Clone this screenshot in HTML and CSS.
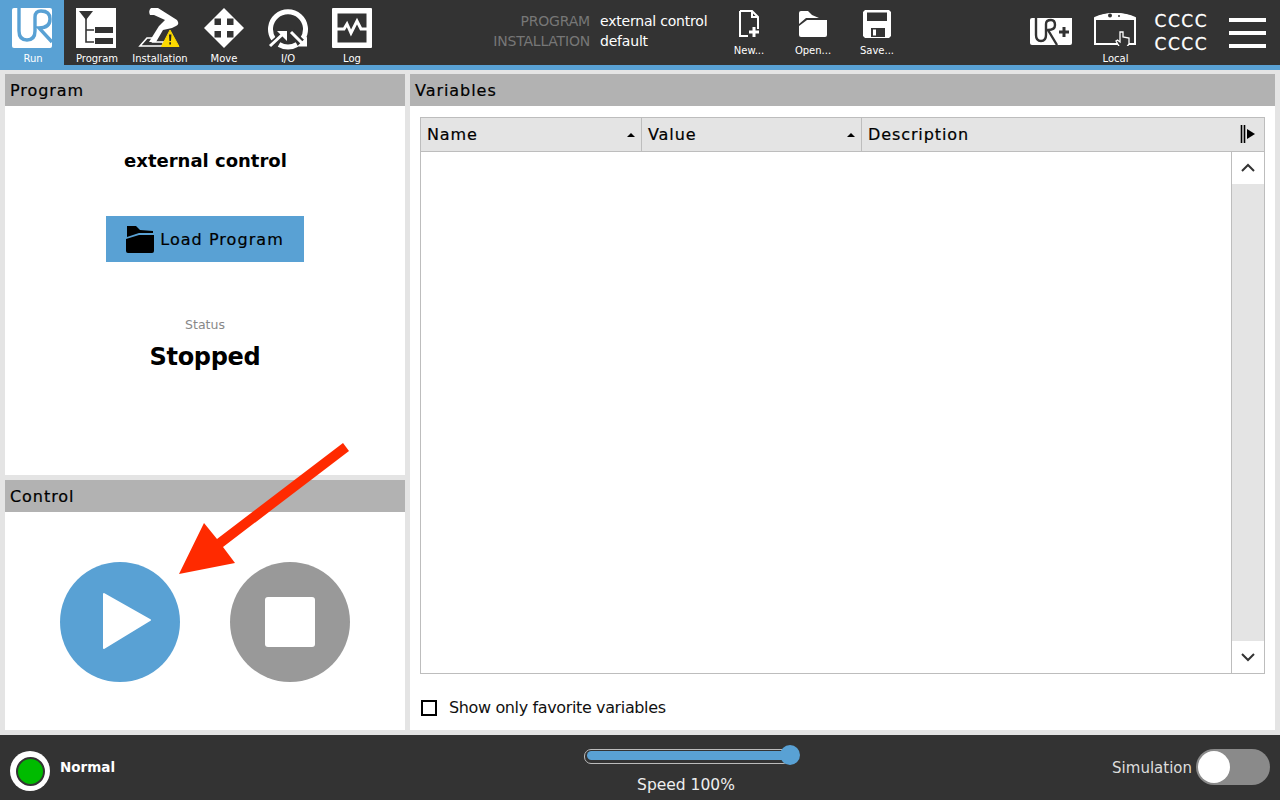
FILE: index.html
```html
<!DOCTYPE html>
<html lang="en">
<head>
  <meta charset="UTF-8">
  <title>PolyScope – Run</title>
  <link rel="stylesheet" href="styles.css">
</head>
<body>
  <header class="topbar">
    <nav class="nav">
      <a class="nav-item active">
        <svg class="nav-icon" viewBox="9 6 48 44"><rect x="12" y="8" width="40" height="40" rx="2" fill="#fff"/><path d="M19 8V31Q19 40 27 40Q35 40 35 31V17Q35 11 41 11Q50 11 50 19Q50 28 39 28L52 42" fill="none" stroke="#59a1d4" stroke-width="3.4"/></svg>
        <span>Run</span>
      </a>
      <a class="nav-item shifted">
        <svg class="nav-icon" viewBox="73 6 48 44"><rect x="76" y="8" width="40" height="40" fill="#fff"/><path d="M79 11H93L86 20Z" fill="#333"/><path d="M86 18V42H94M86 30H94" fill="none" stroke="#333" stroke-width="1.6"/><rect x="95" y="27" width="18" height="6" fill="#333"/><rect x="95" y="38" width="18" height="6" fill="#333"/></svg>
        <span>Program</span>
      </a>
      <a class="nav-item">
        <svg class="nav-icon" viewBox="136 6 48 44"><path d="M151 8H158L177 20Q180 24 176 26L172 28L163 30L156 42H149L159 26L165 20L154 15H150Q148 11 151 8Z" fill="#fff"/><path d="M147 38H156L153 42H164L162 46H140Z" fill="none" stroke="#fff" stroke-width="1.6"/><path d="M170 30L179 46.500H161.500Z" fill="#fbd800" stroke="#fbd800" stroke-linejoin="round"/><path d="M169 34.500H171.400L171 41H169.400ZM169.300 42.300H171V44.500H169.300Z" fill="#222"/></svg>
        <span>Installation</span>
      </a>
      <a class="nav-item">
        <svg class="nav-icon" viewBox="200 6 48 44"><path fill-rule="evenodd" d="M224 8L244 28L224 48L204 28ZM214.500 18.500V25H221V18.500ZM227 18.500V25H233.500V18.500ZM214.500 31V37.500H221V31ZM227 31V37.500H233.500V31Z" fill="#fff"/></svg>
        <span>Move</span>
      </a>
      <a class="nav-item">
        <svg class="nav-icon" viewBox="264 6 48 44"><path d="M273.500 39A17.500 17.500 0 1 1 302.500 39M279 44.500A18 18 0 0 0 297 44.500" fill="none" stroke="#fff" stroke-width="5"/><path d="M269 47L284 33M291 31L304 44" fill="none" stroke="#333" stroke-width="6"/><path d="M270 46L284 33M291 32L303 44" fill="none" stroke="#fff" stroke-width="3"/><path d="M277 31H287V41ZM297 46.500H307V36.500Z" fill="#fff"/></svg>
        <span>I/O</span>
      </a>
      <a class="nav-item">
        <svg class="nav-icon" viewBox="328 6 48 44"><rect x="332" y="8" width="40" height="40" rx="1" fill="#fff"/><rect x="337.500" y="13.500" width="29" height="29" fill="#333"/><path d="M337 29H344L347 24L351 33L357 21L361 29H367" fill="none" stroke="#fff" stroke-width="3"/></svg>
        <span>Log</span>
      </a>
    </nav>

    <div class="info">
      <span class="info-label">PROGRAM</span><span class="info-value">external control</span>
      <span class="info-label">INSTALLATION</span><span class="info-value">default</span>
    </div>

    <div class="files">
      <a class="file-item">
        <svg class="file-icon" viewBox="735 8 28 32"><path d="M740 11H752L758 17V29M748 36H740V11M752 11V17H758" fill="none" stroke="#fff" stroke-width="2"/><path d="M754 27V37M749 32H759" stroke="#fff" stroke-width="3"/></svg>
        <span>New...</span>
      </a>
      <a class="file-item">
        <svg class="file-icon" viewBox="799 8 28 32"><path d="M799 13Q799 11 801 11H808L812 15L819 18H806L799 24ZM799 26L807 20H827V35Q827 37 825 37H801Q799 37 799 35Z" fill="#fff"/></svg>
        <span>Open...</span>
      </a>
      <a class="file-item">
        <svg class="file-icon" viewBox="863 8 28 32"><path d="M865 10H889L891 12V36L889 38H865L863 36V12Z" fill="#fff"/><rect x="867" y="12.500" width="20" height="8.500" fill="#333"/><rect x="871" y="28" width="14" height="9" fill="#333"/><rect x="873" y="29.500" width="3" height="6" fill="#fff"/></svg>
        <span>Save...</span>
      </a>
    </div>

    <div class="tools">
      <svg class="urplus" viewBox="1030 17 42 29"><path d="M1032 18H1072V43Q1072 45 1070 45H1032Q1030 45 1030 43V20Q1030 18 1032 18Z" fill="#fff"/><path d="M1036 18V35Q1036 41 1041 41Q1046 41 1046 35V24Q1046 20 1051 20Q1055 20 1055 25Q1055 30 1048 30L1057 45" fill="none" stroke="#333" stroke-width="2.400"/><path d="M1064 27V37M1059 32H1069" stroke="#333" stroke-width="3"/></svg>
      <a class="local">
        <svg class="local-icon" viewBox="1092 10 48 36"><path d="M1095 44V18Q1103 14 1115 14Q1127 14 1135 18V44Z" fill="none" stroke="#fff" stroke-width="2"/><path d="M1095 18Q1103 13 1115 13Q1127 13 1135 18V20H1095Z" fill="#fff"/><circle cx="1110" cy="15.500" r="2" fill="#333"/><circle cx="1119" cy="16" r="1" fill="#333"/><path d="M1120 32H1123V37L1129 38V44L1126 48H1120L1116 41L1117.500 40L1120 42Z" fill="#333" stroke="#fff" stroke-width="1.300"/></svg>
        <span>Local</span>
      </a>
      <div class="ccc"><span>CCCC</span><span>CCCC</span></div>
      <div class="burger"><i></i><i></i><i></i></div>
    </div>
  </header>
  <div class="accent"></div>

  <main class="content">
    <div class="left">
      <section class="panel program-panel">
        <h2 class="panel-title">Program</h2>
        <div class="program-body">
          <div class="program-name">external control</div>
          <button class="load-btn">
            <svg viewBox="127 225 29 27"><path d="M128 225H137L141 229L154 230V232H140L128 236ZM127 238L140 234H155V250Q155 252 153 252H129Q127 252 127 250Z" fill="#000"/></svg>
            Load Program
          </button>
          <div class="status-label">Status</div>
          <div class="status-value">Stopped</div>
        </div>
      </section>
      <section class="panel control-panel">
        <h2 class="panel-title">Control</h2>
        <div class="control-body">
          <button class="round play"><svg viewBox="0 0 120 120"><path d="M44 32L90 58L44 86Z" fill="#fff" stroke="#fff" stroke-width="2" stroke-linejoin="round"/></svg></button>
          <button class="round stop"><span class="stop-square"></span></button>
        </div>
      </section>
    </div>

    <section class="panel vars">
      <h2 class="panel-title">Variables</h2>
      <div class="vars-body">
        <div class="table">
          <div class="thead">
            <div class="th name">Name<i class="sort"></i></div>
            <div class="th value">Value<i class="sort"></i></div>
            <div class="th desc">Description
              <svg class="col-toggle" viewBox="0 0 16 18"><path d="M1.500 0V18M4.500 0V18" stroke="#000" stroke-width="1.600"/><path d="M7 4L15 9L7 14Z" fill="#000"/></svg>
            </div>
          </div>
          <div class="tbody">
            <div class="rows"></div>
            <div class="scroll">
              <div class="scroll-btn"><svg viewBox="0 0 16 10"><path d="M2 8L8 2L14 8" fill="none" stroke="#333" stroke-width="2"/></svg></div>
              <div class="scroll-track"></div>
              <div class="scroll-btn"><svg viewBox="0 0 16 10"><path d="M2 2L8 8L14 2" fill="none" stroke="#333" stroke-width="2"/></svg></div>
            </div>
          </div>
        </div>
        <label class="fav"><i class="check"></i>Show only favorite variables</label>
      </div>
    </section>
  </main>

  <footer class="bottombar">
    <div class="robot-state">
      <div class="led"><i></i></div>
      <span>Normal</span>
    </div>
    <div class="speed">
      <div class="slider"><div class="fill"></div><div class="thumb"></div></div>
      <div class="speed-label">Speed 100%</div>
    </div>
    <div class="sim">
      <span>Simulation</span>
      <div class="toggle"><i></i></div>
    </div>
  </footer>

  <svg class="arrow" viewBox="0 0 1280 800"><path d="M343 443L349 451L223 547L235 563L179 574L204 523L217 539Z" fill="#ff2a00"/></svg>
</body>
</html>
```

FILE: styles.css
```css
:root{
  --dark:#333;
  --blue:#59a1d4;
  --bg:#e4e4e4;
  --head:#b2b2b2;
  --border:#bdbdbd;
}
*{box-sizing:border-box;margin:0}
html,body{height:100%}
body{
  font-family:"DejaVu Sans",sans-serif;
  background:var(--bg);color:#000;
  width:1280px;height:800px;overflow:hidden;
  display:flex;flex-direction:column;
}
.topbar{height:65px;background:var(--dark);display:flex;color:#fff;flex:none}
.accent{height:5px;background:var(--blue);flex:none}
.nav{display:flex;width:384px;flex:none}
.nav-item{width:64px;height:65px;display:flex;flex-direction:column;align-items:center;padding-top:6px;font-size:10px}
.nav-item.active{background:var(--blue);padding-left:2px}
.nav-item.shifted{padding-left:2px}
.nav-icon{width:48px;height:44px;display:block}
.nav-item span{line-height:12px;margin-top:3px}
.info{width:333px;flex:none;display:grid;grid-template-columns:206px auto;column-gap:10px;align-content:start;padding-top:11px;font-size:14px;line-height:20px;letter-spacing:-.2px}
.info-label{color:#777;text-align:right}
.files{display:flex;flex:none;width:192px}
.file-item{width:64px;display:flex;flex-direction:column;align-items:center;padding-top:8px;font-size:10px}
.file-icon{width:28px;height:32px;display:block}
.file-item span{margin-top:5px;line-height:12px}
.tools{margin-left:auto;display:flex;align-items:flex-start;padding-right:14px}
.urplus{width:42px;height:29px;margin-top:17px}
.local{width:48px;margin-left:20px;display:flex;flex-direction:column;align-items:center;padding-top:10px;font-size:10px}
.local-icon{width:48px;height:36px;display:block}
.local span{line-height:12px;margin-top:7px}
.ccc{display:flex;flex-direction:column;margin-left:15px;font-size:17px;line-height:23px;letter-spacing:1.500px;padding-top:10px;-webkit-text-stroke:.3px #fff}
.burger{display:flex;flex-direction:column;gap:9px;margin-left:21px;padding-top:18px}
.burger i{display:block;width:37px;height:4px;background:#fff}

.content{flex:1;display:flex;gap:5px;padding:4px 5px 5px;min-height:0}
.left{width:400px;display:flex;flex-direction:column;gap:5px;flex:none}
.panel{background:#fff;display:flex;flex-direction:column}
.panel-title{height:32px;background:var(--head);font-size:16px;font-weight:400;line-height:33px;padding-left:5px;letter-spacing:.95px;-webkit-text-stroke:.2px #000}
.program-panel{height:401px}
.control-panel{flex:1}
.program-body{flex:1;display:flex;flex-direction:column;align-items:center}
.program-name{font-size:18px;font-weight:700;margin-top:43px;line-height:24px;padding-left:1px}
.load-btn{margin-top:43px;width:198px;height:46px;background:var(--blue);border:0;font:400 16px "DejaVu Sans",sans-serif;color:#000;display:flex;align-items:center;justify-content:center;gap:5px;letter-spacing:1.050px;-webkit-text-stroke:.2px #000}
.load-btn svg{width:29px;height:27px}
.status-label{margin-top:55px;font-size:12.500px;color:#888;line-height:16px}
.status-value{margin-top:9px;font-size:24px;font-weight:700;line-height:30px;letter-spacing:-.3px}
.control-body{display:flex;gap:50px;padding:50px 0 0 55px}
.round{width:120px;height:120px;border-radius:50%;border:0;padding:0;display:flex;align-items:center;justify-content:center}
.play{background:var(--blue)}
.play svg{width:120px;height:120px}
.stop{background:#999}
.stop-square{width:50px;height:50px;background:#fff;border-radius:3px;display:block}

.vars{flex:1}
.vars-body{flex:1;display:flex;flex-direction:column;padding:11px 10px 0}
.table{height:557px;border:1px solid var(--border);display:flex;flex-direction:column}
.thead{height:34px;display:flex;background:var(--bg);border-bottom:1px solid var(--border);flex:none}
.th{font-size:16px;font-weight:400;line-height:33px;padding-left:6px;position:relative;letter-spacing:.9px;-webkit-text-stroke:.2px #000}
.th.name{width:221px;border-right:1px solid var(--border)}
.th.value{width:220px;border-right:1px solid var(--border)}
.th.desc{flex:1}
.sort{position:absolute;right:6px;top:15px;border:4px solid transparent;border-top:0;border-bottom:4px solid #000}
.col-toggle{position:absolute;right:8px;top:7px;width:16px;height:18px}
.tbody{flex:1;display:flex;min-height:0}
.rows{flex:1}
.scroll{width:33px;border-left:1px solid var(--border);display:flex;flex-direction:column}
.scroll-btn{height:32px;display:flex;align-items:center;justify-content:center;flex:none}
.scroll-btn svg{width:16px;height:10px}
.scroll-track{flex:1;background:var(--bg)}
.fav{display:flex;align-items:center;gap:12px;margin-top:24px;padding-left:1px;font-size:16px;line-height:20px;letter-spacing:-.37px;color:#111}
.check{width:16px;height:16px;border:2.500px solid #000;display:block}

.bottombar{height:65px;background:var(--dark);color:#fff;display:flex;position:relative;flex:none}
.robot-state{display:flex;align-items:flex-start;padding:16px 0 0 10px;width:584px;flex:none;font-size:13.500px;font-weight:700}
.robot-state span{margin-left:10px;line-height:32px}
.led{width:40px;height:40px;border-radius:50%;background:#fff;display:flex;align-items:center;justify-content:center}
.led i{display:block;width:29px;height:29px;border-radius:50%;background:#0b0;border:2.500px solid var(--dark)}
.speed{width:216px;padding-top:10px;flex:none}
.slider{height:20px;position:relative}
.slider::before{content:"";position:absolute;left:0;right:10px;top:4px;height:13px;border:1px solid #bbb;border-radius:7px}
.fill{position:absolute;left:3px;right:12px;top:6px;height:9px;background:var(--blue);border-radius:5px}
.thumb{position:absolute;right:0;top:0;width:20px;height:20px;border-radius:50%;background:var(--blue)}
.speed-label{text-align:center;font-size:15.500px;margin-top:10px;line-height:20px;color:#eee;padding-right:12px}
.sim{margin-left:auto;display:flex;align-items:flex-start;padding:14px 10px 0 0;font-size:15px;color:#ddd}
.sim span{margin-right:4px;line-height:39px}
.toggle{width:74px;height:36px;border-radius:18px;background:#8a8a8a;position:relative}
.toggle i{position:absolute;left:2px;top:2px;width:32px;height:32px;border-radius:50%;background:#fff}

.arrow{position:absolute;left:0;top:0;width:1280px;height:800px;pointer-events:none}
```
